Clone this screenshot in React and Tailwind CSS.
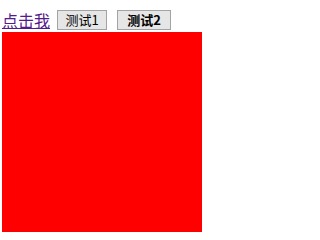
export default function App() {
    return (
        <div className="pt-[10px] pl-[2px] bg-white" style={{ fontFamily: '"Noto Sans CJK SC", "Liberation Sans", sans-serif' }}>
            <div className="flex items-center h-[20px]">
                <a href="#" className="text-[16px] leading-[20px] underline text-[#551a8b] w-[48px]">
                    点击我
                </a>
                <button className="ml-[7px] w-[50px] h-[20px] border border-[#a3a3a3] bg-[#e6e6e6] text-[13px] leading-[18px] text-black">
                    测试1
                </button>
                <button className="ml-[10px] w-[54px] h-[20px] border border-[#a3a3a3] bg-[#e6e6e6] text-[13px] leading-[18px] font-bold text-black">
                    测试2
                </button>
            </div>
            <div className="mt-[2px] w-[200px] h-[200px] bg-[#ff0000]" />
        </div>
    );
}
